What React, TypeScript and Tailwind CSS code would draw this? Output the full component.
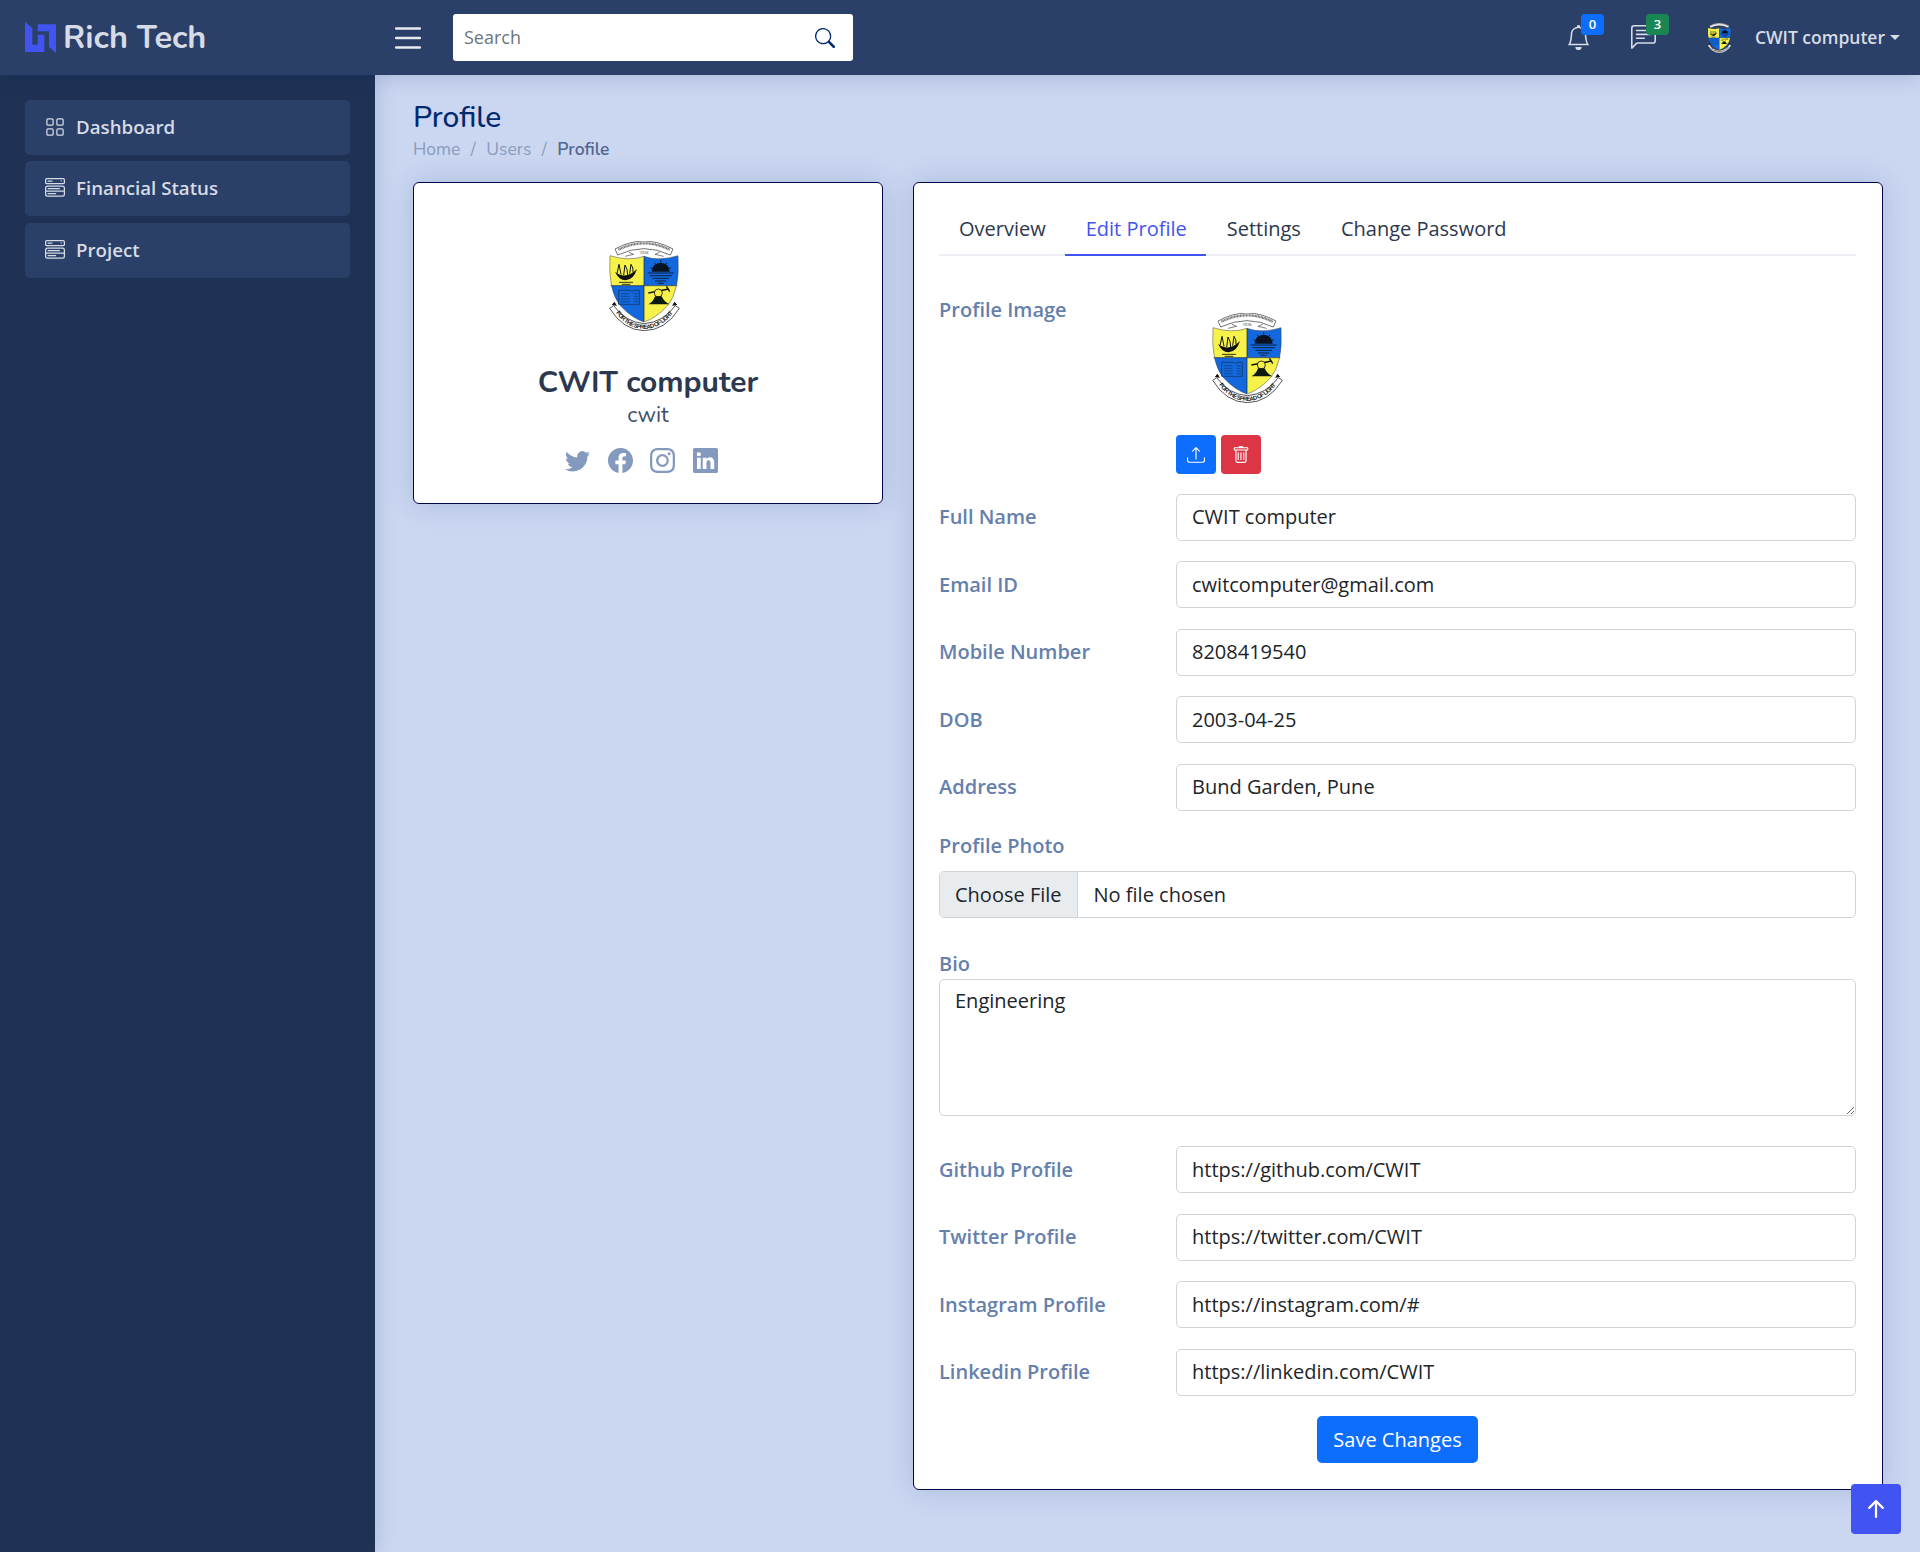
import { useId } from "react";
import {
  BsArrowUpShort,
  BsBell,
  BsChatLeftText,
  BsFacebook,
  BsGrid,
  BsInstagram,
  BsLinkedin,
  BsList,
  BsMenuButtonWide,
  BsSearch,
  BsTrash,
  BsTwitter,
  BsUpload,
} from "react-icons/bs";

const sans = "font-['Open_Sans','Liberation_Sans',sans-serif]";
const heading = "font-['Nunito','Lato','Open_Sans',sans-serif]";

const shieldPath =
  "M3 44 Q 60 62 105 46 Q 150 62 207 44 Q 214 150 175 195 Q 140 232 105 243 Q 70 232 35 195 Q -4 150 3 44Z";

/* college crest, drawn by hand */
const Crest = ({ className }: { className?: string }) => {
  const id = useId();
  return (
    <svg viewBox="0 0 213 270" className={className}>
      <defs>
        <path id={id} d="M16 208 Q 50 262 106 264 Q 162 262 197 208" fill="none" />
        <clipPath id={`${id}c`}>
          <path d={shieldPath} />
        </clipPath>
      </defs>
      <path d="M18 24 Q 105 -24 192 24 L 184 42 Q 105 4 26 42Z" fill="#fff" stroke="#555" strokeWidth="2.5" />
      <path d="M28 26 Q 105 -12 182 26" fill="none" stroke="#666" strokeWidth="7" strokeDasharray="3 1.5" />
      <text x="105" y="40" textAnchor="middle" fontSize="13" fontFamily="Liberation Serif, serif" fill="#333">1938</text>
      <path d="M48 46 L74 40 L60 34 M164 46 L138 40 L152 34" fill="none" stroke="#444" strokeWidth="2" />
      <g clipPath={`url(#${id}c)`}>
        <rect x="0" y="0" width="105" height="134" fill="#f7f24a" />
        <rect x="105" y="0" width="110" height="134" fill="#1268dc" />
        <rect x="0" y="134" width="105" height="120" fill="#1268dc" />
        <rect x="105" y="134" width="110" height="120" fill="#f7f24a" />
      </g>
      <path d={shieldPath} fill="none" stroke="#444" strokeWidth="1.5" />
      <path d="M105 46 V242 M5 134 H205" stroke="#123" strokeWidth="2" />
      {/* ship */}
      <path d="M18 92 Q 50 118 84 84 Q 74 116 50 118 Q 28 116 18 92Z" fill="#111" />
      <path d="M24 98 L30 70 L36 100 M44 102 L48 72 Q 56 84 56 102 M62 98 L66 70 Q 74 80 72 94" fill="none" stroke="#111" strokeWidth="3" />
      <path d="M30 124 H72 M38 130 H64" stroke="#111" strokeWidth="2.5" />
      {/* sun over water */}
      <path d="M128 92 A 27 27 0 0 1 182 92Z" fill="#0a1420" />
      <path d="M155 58 V64 M136 66 L141 71 M174 66 L169 71 M125 80 L131 83 M185 80 L179 83" stroke="#0a1420" strokeWidth="3" />
      <path d="M116 96 H194 M122 104 H188 M130 112 H180 M138 120 H172 M146 127 H164" stroke="#0a1420" strokeWidth="2.5" />
      {/* book */}
      <path d="M32 148 H66 Q 70 150 72 152 Q 74 150 78 148 H94 V190 H76 Q 74 192 72 192 Q 70 192 68 190 H32Z" fill="#1268dc" stroke="#123a70" strokeWidth="2.5" transform="translate(-3 0)" />
      <path d="M36 158 H62 M36 166 H62 M36 174 H62 M36 182 H62 M74 158 H88 M74 166 H88 M74 174 H88 M74 182 H88" stroke="#123a70" strokeWidth="2" />
      {/* torch and hill */}
      <path d="M118 156 L150 150 L178 144 M178 144 L172 136 M178 144 L182 152" stroke="#111" strokeWidth="4" fill="none" />
      <circle cx="148" cy="156" r="12" fill="#f7f24a" stroke="#111" strokeWidth="2.5" />
      <path d="M118 190 Q 132 184 138 166 L158 166 Q 166 184 182 190Z" fill="#0c1a10" />
      {/* motto scroll */}
      <path d="M2 202 L14 194 Q 50 244 106 248 Q 162 244 199 194 L211 202 Q 170 268 106 269 Q 42 268 2 202Z" fill="#fff" stroke="#333" strokeWidth="2.5" />
      <path d="M10 192 L16 184 L22 194M203 192 L197 184 L191 194" fill="#111" stroke="#111" strokeWidth="3" />
      <text fontSize="18" fontWeight="700" fontFamily="Liberation Sans, sans-serif" fill="#222">
        <textPath href={`#${id}`} startOffset="50%" textAnchor="middle" textLength="204">
          FOR THE SPREAD OF LIGHT
        </textPath>
      </text>
    </svg>
  );
};

const Logo = () => (
  <svg viewBox="0 0 93 93" className="h-[31px] w-[31px] shrink-0">
    <path d="M0 0 L22 18 V68 H38 V38 H58 V90 H0Z" fill="#4154f1" />
    <path d="M38 7 H93 V93 L72 75 V28 H38Z" fill="#4154f1" />
  </svg>
);

const sideItems = [
  { label: "Dashboard", Icon: BsGrid },
  { label: "Financial Status", Icon: BsMenuButtonWide },
  { label: "Project", Icon: BsMenuButtonWide },
];

const fieldsTop = [
  { label: "Full Name", value: "CWIT computer" },
  { label: "Email ID", value: "cwitcomputer@gmail.com" },
  { label: "Mobile Number", value: "8208419540" },
  { label: "DOB", value: "2003-04-25" },
  { label: "Address", value: "Bund Garden, Pune" },
];

const fieldsBottom = [
  { label: "Github Profile", value: "https://github.com/CWIT" },
  { label: "Twitter Profile", value: "https://twitter.com/CWIT" },
  { label: "Instagram Profile", value: "https://instagram.com/#" },
  { label: "Linkedin Profile", value: "https://linkedin.com/CWIT" },
];

const tabs = ["Overview", "Edit Profile", "Settings", "Change Password"];

const labelCls = "text-[20px] leading-[30px] font-semibold text-[#6580ac]";
const boxCls =
  "h-[47px] rounded-[5px] border border-[#ced4da] bg-white text-[20px] leading-[30px] text-[#212529]";
const cardCls =
  "rounded-[6px] border border-[#01054a] bg-white shadow-[0_0_30px_rgba(1,41,112,0.16)]";

const Row = ({ label, value }: { label: string; value: string }) => (
  <div className="mb-[20.5px] flex items-center">
    <label className={`${labelCls} w-[237px] shrink-0`}>{label}</label>
    <div className={`${boxCls} flex-1 px-[15px] py-[7.5px]`}>{value}</div>
  </div>
);

export default function App() {
  return (
    <div className={`${sans} relative flex min-h-[1552px] flex-col bg-[#cbd7f1]`}>
      {/* Header */}
      <header className="z-10 flex h-[75px] items-center bg-[#2a4068] pl-[25px] pr-[20px] shadow-[0_2px_20px_rgba(1,41,112,0.18)]">
        <div className="flex w-[364px] shrink-0 items-center gap-[7px]">
          <Logo />
          <span className={`${heading} text-[32.5px] font-bold text-[#d7dbe6]`}>Rich Tech</span>
        </div>
        <BsList className="mr-[26px] shrink-0 text-[38px] text-[#e8eaf0]" />
        <div className="flex h-[47px] w-[400px] items-center rounded-[3px] bg-white pl-[11px] pr-[18px]">
          <span className="flex-1 text-[18px] text-[#6c757d]">Search</span>
          <BsSearch className="text-[20px] text-[#012970]" />
        </div>
        <div className="ml-auto flex items-center text-[#d7dbe6]">
          <div className="relative mr-[40px]">
            <BsBell className="text-[25px]" />
            <span className="absolute -top-[11px] left-[15px] flex h-[21px] w-[23px] items-center justify-center rounded-[4px] bg-[#0d6efd] text-[13px] font-semibold text-white">0</span>
          </div>
          <div className="relative mr-[51px]">
            <BsChatLeftText className="text-[25px]" />
            <span className="absolute -top-[11px] left-[15px] flex h-[21px] w-[23px] items-center justify-center rounded-[4px] bg-[#198754] text-[13px] font-semibold text-white">3</span>
          </div>
          <Crest className="mr-[23px] h-[30px] w-[25px]" />
          <span className="text-[17.5px] font-semibold">CWIT computer</span>
          <span className="ml-[5px] h-0 w-0 border-x-[5px] border-t-[5px] border-x-transparent border-t-[#d7dbe6]" />
        </div>
      </header>

      <div className="flex flex-1">
        {/* Sidebar */}
        <aside className="relative z-[1] flex w-[375px] shrink-0 flex-col gap-[6.4px] bg-[#1f3254] px-[25px] pt-[25px] shadow-[0_0_20px_rgba(1,41,112,0.18)]">
          {sideItems.map(({ label, Icon }) => (
            <div key={label} className="flex h-[55px] items-center gap-[9px] rounded-[5px] bg-[#2a4068] pb-[1px] pl-[18px] text-[18.7px] font-semibold text-[#d7dbe6]">
              <Icon className="w-[24px] text-[20px]" />
              {label}
            </div>
          ))}
        </aside>

        {/* Main */}
        <main className="flex-1 pl-[38px] pr-[37px] pt-[24px]">
          <h1 className={`${heading} text-[30px] leading-[38px] font-medium text-[#012970]`}>Profile</h1>
          <div className={`${heading} flex h-[24px] items-center text-[17.5px] text-[#899bbd]`}>
            <span>Home</span>
            <span className="mx-[10.5px]">/</span>
            <span>Users</span>
            <span className="mx-[10.5px]">/</span>
            <span className="font-semibold text-[#51678f]">Profile</span>
          </div>

          <div className="mt-[21px] flex items-start gap-[30px]">
            {/* Profile card */}
            <section className={`${cardCls} flex h-[322px] w-[470px] shrink-0 flex-col items-center pt-[58px]`}>
              <Crest className="mr-[7px] h-[90px] w-[71px]" />
              <h2 className={`${heading} mt-[32px] text-[30px] leading-[40px] font-bold text-[#2c384e]`}>CWIT computer</h2>
              <p className={`${heading} -mt-[2px] text-[22px] leading-[28px] text-[#415069]`}>cwit</p>
              <div className="mr-[13px] mt-[19px] flex items-center gap-[17.5px] text-[25px] text-[#8399bd]">
                <BsTwitter />
                <BsFacebook />
                <BsInstagram />
                <BsLinkedin />
              </div>
            </section>

            {/* Edit card */}
            <section className={`${cardCls} h-[1308px] w-[970px] shrink-0 pl-[25px] pr-[26px] pt-[25px]`}>
              <nav className="flex h-[48px] border-b-2 border-[#ebeef4] text-[20px] text-[#2c384e]">
                {tabs.map((t, i) => (
                  <div
                    key={t}
                    className={`-mb-[2px] flex h-[48px] items-center border-b-2 pb-[5px] pr-[19px] ${i === 0 ? "pl-[20px]" : "pl-[21px]"} ${
                      t === "Edit Profile" ? "border-[#4154f1] text-[#4154f1]" : "border-transparent"
                    }`}
                  >
                    {t}
                  </div>
                ))}
              </nav>

              <div className="mt-[39px] flex h-[198.5px]">
                <label className={`${labelCls} w-[237px] shrink-0`}>Profile Image</label>
                <div>
                  <Crest className="ml-[36px] mt-[18px] h-[90px] w-[71px]" />
                  <div className="mt-[32px] flex gap-[5px]">
                    <button className="flex h-[39px] w-[40px] items-center justify-center rounded-[4px] bg-[#0d6efd] text-[18px] text-white">
                      <BsUpload />
                    </button>
                    <button className="flex h-[39px] w-[40px] items-center justify-center rounded-[4px] bg-[#dc3545] text-[18px] text-white">
                      <BsTrash />
                    </button>
                  </div>
                </div>
              </div>

              {fieldsTop.map((f) => (
                <Row key={f.label} {...f} />
              ))}

              <label className={`${labelCls} -mt-[0.5px] block`}>Profile Photo</label>
              <div className={`${boxCls} mt-[10.5px] flex items-center overflow-hidden`}>
                <span className="flex h-full items-center border-r border-[#ced4da] bg-[#e9ecef] px-[15px]">Choose File</span>
                <span className="pl-[16px]">No file chosen</span>
              </div>

              <label className={`${labelCls} mt-[31px] block`}>Bio</label>
              <textarea
                readOnly
                defaultValue="Engineering"
                className="mb-[30px] block h-[137px] w-full rounded-[5px] border border-[#ced4da] px-[15px] pb-[7px] pt-[6px] text-[20px] leading-[30px] text-[#212529] outline-none"
              />

              {fieldsBottom.map((f) => (
                <Row key={f.label} {...f} />
              ))}

              <div className="text-center">
                <button className="h-[47px] rounded-[5px] bg-[#0d6efd] px-[16px] text-[20px] text-white">Save Changes</button>
              </div>
            </section>
          </div>
        </main>
      </div>

      {/* back to top */}
      <div className="absolute left-[1851px] top-[1484px] flex h-[50px] w-[50px] items-center justify-center rounded-[4px] bg-[#4154f1] text-[36px] text-white">
        <BsArrowUpShort />
      </div>
    </div>
  );
}
